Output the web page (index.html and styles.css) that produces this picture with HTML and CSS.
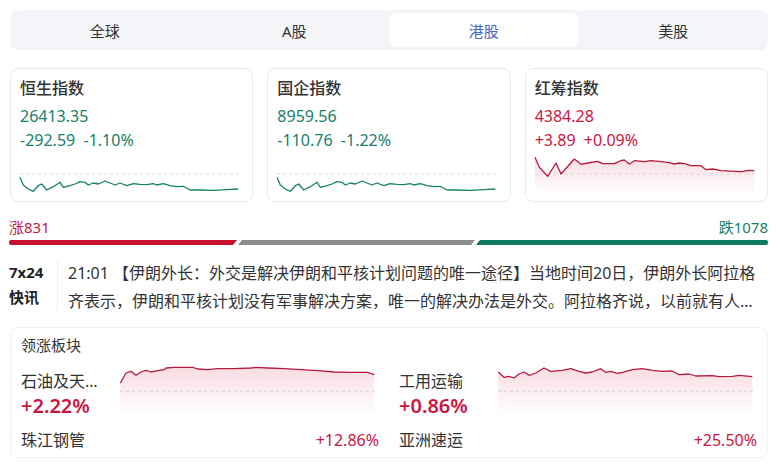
FILE: index.html
```html
<!DOCTYPE html>
<html lang="zh">
<head>
<meta charset="utf-8">
<link rel="stylesheet" href="styles.css">
</head>
<body>
<div class="page">
  <nav class="tabs">
    <div class="tab">全球</div>
    <div class="tab">A股</div>
    <div class="tab active">港股</div>
    <div class="tab">美股</div>
  </nav>

  <section class="cards">
    <div class="card">
      <div class="card-title">恒生指数</div>
      <div class="card-value down">26413.35</div>
      <div class="card-change down">-292.59&nbsp;&nbsp;-1.10%</div>
      <svg class="spark" viewBox="0 0 220 42" preserveAspectRatio="none">
        <line x1="0" y1="20" x2="220" y2="20" class="dash"/>
        <polyline class="line-green" points="0,23.3 3.3,31 8.3,35 13.3,37.3 18.3,31.7 21.7,30 26.7,36 33.3,32.7 40,28.3 43.3,33.3 50,31.7 55,30 60,27.7 65,28.3 68.3,31 73.3,29 78.3,30 85,27 90,29 95,31 100,29 106.7,31.7 113.3,29.7 120,30.3 126.7,30.7 133.3,29.7 136.7,31 143.3,29.7 150,31.7 156.7,32.7 163.3,32.3 170,36 180,36 193.3,36.3 206.7,35.7 218.3,35"/>
      </svg>
    </div>
    <div class="card">
      <div class="card-title">国企指数</div>
      <div class="card-value down">8959.56</div>
      <div class="card-change down">-110.76&nbsp;&nbsp;-1.22%</div>
      <svg class="spark" viewBox="0 0 220 42" preserveAspectRatio="none">
        <line x1="0" y1="20" x2="220" y2="20" class="dash"/>
        <polyline class="line-green" points="0,23.3 3.3,31 8.3,35 13.3,37.3 18.3,31.7 21.7,30 26.7,36 33.3,32.7 40,28.3 43.3,33.3 50,31.7 55,30 60,27.7 65,28.3 68.3,31 73.3,29 78.3,30 85,27 90,29 95,31 100,29 106.7,31.7 113.3,29.7 120,30.3 126.7,30.7 133.3,29.7 136.7,31 143.3,29.7 150,31.7 156.7,32.7 163.3,32.3 170,36 180,36 193.3,36.3 206.7,35.7 218.3,35"/>
      </svg>
    </div>
    <div class="card">
      <div class="card-title">红筹指数</div>
      <div class="card-value up">4384.28</div>
      <div class="card-change up">+3.89&nbsp;&nbsp;+0.09%</div>
      <svg class="spark" viewBox="0 0 220 42" preserveAspectRatio="none">
        <defs>
          <linearGradient id="g1" x1="0" y1="0" x2="0" y2="1">
            <stop offset="0" stop-color="#d4244a" stop-opacity="0.16"/>
            <stop offset="1" stop-color="#d4244a" stop-opacity="0"/>
          </linearGradient>
        </defs>
        <polygon fill="url(#g1)" points="0,3.3 4.3,13.3 12.7,22.3 21,9 26,20 39.3,5 46,10.3 52.7,9 62.7,7.3 67.7,9.7 79.3,9.7 86,6.7 89.3,6 94.3,10 99.3,6.7 109.3,7.7 116,6.7 126,7.7 134.3,8.7 139.3,10 144.3,9 149.3,9.7 156,11.7 166,11.7 171,15.7 177.7,15 186,16.7 199.3,17.3 207.7,17.7 212.7,16.3 219.3,16.7 219.3,40 0,40"/>
        <line x1="0" y1="20" x2="220" y2="20" class="dash"/>
        <polyline class="line-red" points="0,3.3 4.3,13.3 12.7,22.3 21,9 26,20 39.3,5 46,10.3 52.7,9 62.7,7.3 67.7,9.7 79.3,9.7 86,6.7 89.3,6 94.3,10 99.3,6.7 109.3,7.7 116,6.7 126,7.7 134.3,8.7 139.3,10 144.3,9 149.3,9.7 156,11.7 166,11.7 171,15.7 177.7,15 186,16.7 199.3,17.3 207.7,17.7 212.7,16.3 219.3,16.7"/>
      </svg>
    </div>
  </section>

  <section class="breadth">
    <div class="breadth-labels">
      <span class="up">涨831</span>
      <span class="down">跌1078</span>
    </div>
    <div class="breadth-bar">
      <div class="seg seg-up"></div>
      <div class="seg seg-flat"></div>
      <div class="seg seg-down"></div>
    </div>
  </section>

  <section class="news">
    <div class="news-tag">7x24<br>快讯</div>
    <p class="news-text">21:01 【伊朗外长：外交是解决伊朗和平核计划问题的唯一途径】当地时间20日，伊朗外长阿拉格齐表示，伊朗和平核计划没有军事解决方案，唯一的解决办法是外交。阿拉格齐说，以前就有人试图通过军事手段解决伊朗核问题，但都失败了。</p>
  </section>

  <section class="sectors">
    <div class="sectors-title">领涨板块</div>
    <div class="sector-grid">
      <div class="sector">
        <div class="sector-top">
          <div class="sector-info">
            <div class="sector-name">石油及天然气</div>
            <div class="sector-pct">+2.22%</div>
          </div>
          <svg class="sector-spark" viewBox="0 0 260 55" preserveAspectRatio="none">
            <defs>
              <linearGradient id="g2" x1="0" y1="0" x2="0" y2="1">
                <stop offset="0" stop-color="#d4244a" stop-opacity="0.16"/>
                <stop offset="1" stop-color="#d4244a" stop-opacity="0"/>
              </linearGradient>
            </defs>
            <polygon fill="url(#g2)" points="1.3,20 7,10 12,8.3 17,12.3 22,9 27,7.3 32,9 38.7,7.7 45.3,6.7 47,5 55.3,4.3 63.7,4.3 73.7,4.3 78.7,6 88.7,6.7 98.7,5.7 115.3,5.7 132,5 137,4.3 148.7,5 165.3,5.7 182,6.7 198.7,7.7 215.3,9 232,9.3 248.7,9.3 255.3,11.7 255.3,52 1.3,52"/>
            <line x1="1" y1="28.3" x2="256" y2="28.3" class="dash"/>
            <polyline class="line-red" points="1.3,20 7,10 12,8.3 17,12.3 22,9 27,7.3 32,9 38.7,7.7 45.3,6.7 47,5 55.3,4.3 63.7,4.3 73.7,4.3 78.7,6 88.7,6.7 98.7,5.7 115.3,5.7 132,5 137,4.3 148.7,5 165.3,5.7 182,6.7 198.7,7.7 215.3,9 232,9.3 248.7,9.3 255.3,11.7"/>
          </svg>
        </div>
        <div class="sector-lead">
          <span class="lead-name">珠江钢管</span>
          <span class="lead-pct">+12.86%</span>
        </div>
      </div>
      <div class="sector">
        <div class="sector-top">
          <div class="sector-info">
            <div class="sector-name">工用运输</div>
            <div class="sector-pct">+0.86%</div>
          </div>
          <svg class="sector-spark" viewBox="0 0 260 55" preserveAspectRatio="none">
            <defs>
              <linearGradient id="g3" x1="0" y1="0" x2="0" y2="1">
                <stop offset="0" stop-color="#d4244a" stop-opacity="0.16"/>
                <stop offset="1" stop-color="#d4244a" stop-opacity="0"/>
              </linearGradient>
            </defs>
            <polygon fill="url(#g3)" points="1.3,9 7,14.3 12,13.3 17,15 22,11 27,9 32,12.3 38.7,10 47,5 53.7,8.3 65.3,7.3 73.7,5.7 82,8.3 88.7,10 95.3,9 103.7,5.7 108.7,9.3 113.7,8.3 120.3,10.3 125.3,9.3 135.3,6.7 145.3,5.7 155.3,7.3 165.3,8.3 175.3,8 182,11.7 192,11 198.7,13 215.3,12.7 222,13.7 235.3,13.3 242,12.3 255.3,13.7 255.3,52 1.3,52"/>
            <line x1="1" y1="28.3" x2="256" y2="28.3" class="dash"/>
            <polyline class="line-red" points="1.3,9 7,14.3 12,13.3 17,15 22,11 27,9 32,12.3 38.7,10 47,5 53.7,8.3 65.3,7.3 73.7,5.7 82,8.3 88.7,10 95.3,9 103.7,5.7 108.7,9.3 113.7,8.3 120.3,10.3 125.3,9.3 135.3,6.7 145.3,5.7 155.3,7.3 165.3,8.3 175.3,8 182,11.7 192,11 198.7,13 215.3,12.7 222,13.7 235.3,13.3 242,12.3 255.3,13.7"/>
          </svg>
        </div>
        <div class="sector-lead">
          <span class="lead-name">亚洲速运</span>
          <span class="lead-pct">+25.50%</span>
        </div>
      </div>
    </div>
  </section>
</div>
</body>
</html>
```

FILE: styles.css
```css
* { box-sizing: border-box; }
html, body { margin: 0; padding: 0; background: #fff; }
body {
  width: 780px;
  height: 470px;
  overflow: hidden;
  font-family: "Noto Sans", "Noto Sans CJK SC", sans-serif;
  color: #333;
}
.page { padding: 10px 12px 0 9px; }

.up { color: #c8173f; }
.down { color: #17806b; }

/* tabs */
.tabs {
  display: grid;
  grid-template-columns: repeat(4, 1fr);
  height: 40px;
  margin-left: 1px;
  padding: 3px 0;
  background: #f3f5f9;
  border-radius: 8px;
}
.tab {
  display: flex;
  align-items: center;
  justify-content: center;
  font-size: 15px;
  color: #333;
  border-radius: 8px;
}
.tab.active { background: #fff; color: #4b63c6; }

/* index cards */
.cards {
  display: grid;
  grid-template-columns: repeat(3, 1fr);
  gap: 14px;
  margin-top: 18px;
  margin-left: 1px;
}
.card {
  height: 134px;
  border: 1px solid #e8e9ec;
  border-radius: 8px;
  padding: 9px 9px 0;
  display: flex;
  flex-direction: column;
}
.card-title { font-size: 16px; line-height: 20px; color: #333; font-weight: 500; }
.card-value { font-size: 16px; line-height: 22px; margin-top: 7px; }
.card-change { font-size: 16px; line-height: 22px; margin-top: 2px; }
.spark { width: 220px; height: 42px; margin-top: 3px; overflow: visible; }
.dash { stroke: #d8d8d8; stroke-width: 1; stroke-dasharray: 3 3; }
.line-green { fill: none; stroke: #17806b; stroke-width: 1.3; stroke-linejoin: round; }
.line-red { fill: none; stroke: #b81a3e; stroke-width: 1.3; stroke-linejoin: round; }

/* breadth */
.breadth { margin-top: 15px; }
.breadth-labels {
  display: flex;
  justify-content: space-between;
  font-size: 15px;
  line-height: 20px;
}
.breadth-bar { display: flex; gap: 1px; margin-top: 3px; height: 5px; }
.seg { height: 5px; }
.seg-up {
  width: 228px;
  background: #c8102e;
  clip-path: polygon(0 0, 100% 0, calc(100% - 4px) 100%, 0 100%);
  border-radius: 2px 0 0 2px;
}
.seg-flat {
  width: 237px;
  background: #8b8c90;
  clip-path: polygon(4px 0, 100% 0, calc(100% - 4px) 100%, 0 100%);
}
.seg-down {
  flex: 1;
  background: #0f7a62;
  clip-path: polygon(4px 0, 100% 0, 100% 100%, 0 100%);
  border-radius: 0 2px 2px 0;
}

/* news */
.news { display: flex; margin-top: 14px; align-items: flex-start; }
.news-tag {
  width: 49px;
  padding-top: 1px;
  font-size: 15px;
  line-height: 25px;
  font-weight: 700;
  color: #222;
  border-right: 1px solid #eceef0;
}
.news-text {
  margin: 0 0 0 10px;
  width: 700px;
  font-size: 16px;
  line-height: 28px;
  color: #333;
  display: -webkit-box;
  -webkit-line-clamp: 2;
  -webkit-box-orient: vertical;
  overflow: hidden;
}

/* sectors */
.sectors {
  margin-top: 12px;
  margin-left: 1px;
  border: 1px solid #f0f1f3;
  border-radius: 8px;
  padding: 6px 10px 6px 10px;
  height: 131px;
}
.sectors-title { font-size: 15px; line-height: 22px; color: #333; }
.sector-grid {
  display: grid;
  grid-template-columns: 1fr 1fr;
  gap: 20px;
  margin-top: 4px;
}
.sector-top { display: flex; align-items: flex-start; }
.sector-info { width: 98px; padding-top: 10px; }
.sector-name {
  max-width: 82px;
  font-size: 16px;
  line-height: 22px;
  white-space: nowrap;
  overflow: hidden;
  text-overflow: ellipsis;
}
.sector-pct { font-size: 20px; line-height: 28px; font-weight: 600; color: #c8173f; }
.sector-spark { width: 260px; height: 55px; margin-top: 3px; }
.sector-lead {
  display: flex;
  justify-content: space-between;
  font-size: 16px;
  line-height: 22px;
  margin-top: 9px;
}
.lead-pct { font-size: 16px; color: #c8173f; }
```
